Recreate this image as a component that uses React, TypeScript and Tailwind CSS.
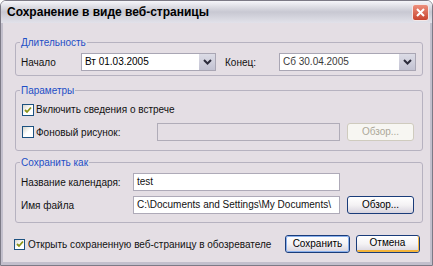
import React from "react";

function Check({ checked, size = "w-[12px] h-[12px]" }: { checked?: boolean; size?: string }) {
  return (
    <span
      className={`${size} shrink-0 border border-[#1c5180] bg-linear-to-br from-[#d8d6cc] via-white to-white flex items-center justify-center`}
    >
      {checked && (
        <svg width="8" height="8" viewBox="0 0 8 8">
          <path d="M1 4 L3 6 L7 1.5" fill="none" stroke="#8c9418" strokeWidth="1.8" />
        </svg>
      )}
    </span>
  );
}

function Select({ value, width, tone = "text-black" }: { value: string; width: string; tone?: string }) {
  return (
    <div className={`${width} h-[18px] flex border border-[#a9a6b4] bg-white`}>
      <span className={`flex-1 pl-[3px] leading-[16px] ${tone}`}>{value}</span>
      <span className="w-[16px] bg-linear-to-b from-[#dcdce6] to-[#c2c2d2] flex items-center justify-center">
        <svg width="9" height="6" viewBox="0 0 9 6">
          <path d="M1 1 L4.5 4.5 L8 1" fill="none" stroke="#2c2c3c" strokeWidth="2" />
        </svg>
      </span>
    </div>
  );
}

function Field({ value, width, disabled }: { value?: string; width: string; disabled?: boolean }) {
  return (
    <div
      className={`${width} h-[18px] pl-[3px] leading-[16px] border ${
        disabled ? "border-[#b0acb8] bg-[#e4dee4]" : "border-[#aeaab8] bg-white"
      } whitespace-nowrap overflow-hidden`}
    >
      {value}
    </div>
  );
}

function Button({ label, width, variant = "normal" }: { label: string; width: string; variant?: "normal" | "disabled" | "focus" | "hover" }) {
  const outer =
    variant === "disabled"
      ? "border-[#cfcbbe] bg-[#f7f6f2] text-[#aca899]"
      : "border-[#1a3c7a] bg-linear-to-b from-white via-[#f4f2f4] to-[#d8d4de] text-black";
  const inner =
    variant === "focus"
      ? "border border-[#8ab0ec]"
      : variant === "hover"
      ? "border-b-2 border-r border-[#f4b43a]"
      : "";
  return (
    <div className={`${width} h-[18px] rounded-[3px] border ${outer} flex`}>
      <div className={`flex-1 rounded-[2px] ${inner} flex items-center justify-center leading-none`}>{label}</div>
    </div>
  );
}

export default function App() {
  return (
    <div className="w-[433px] h-[266px] flex flex-col border border-[#7c7a86] rounded-t-[6px] overflow-hidden font-['Liberation_Sans',Arial,sans-serif] text-[10px] text-[#111]">
      {/* заголовок окна */}
      <div className="h-[22px] shrink-0 flex items-center pl-[6px] pr-[3px] bg-linear-to-b from-[#f6f6fa] via-[#c8c8d2] to-[#e2e2ea]">
        <span className="flex-1 text-[12px] font-bold text-black">Сохранение в виде веб-страницы</span>
        <span className="w-[17px] h-[17px] rounded-[3px] border border-[#f4e8e8] bg-linear-to-b from-[#ec8e7c] to-[#c8432e] flex items-center justify-center">
          <svg width="9" height="9" viewBox="0 0 9 9">
            <path d="M1 1 L8 8 M8 1 L1 8" stroke="white" strokeWidth="2" />
          </svg>
        </span>
      </div>

      <div className="flex-1 flex flex-col border-x-2 border-b-[3px] border-[#c2bfcc] bg-[#e4dee4]">
        {/* Длительность */}
        <fieldset className="mt-[13px] ml-[12px] mr-[7px] h-[40px] border border-[#b6b2c0] rounded-[3px] px-[5px]">
          <legend className="ml-[-1px] px-[1px] leading-[13px] text-[#1e4fc6]">Длительность</legend>
          <div className="mt-[4px] flex items-center">
            <span className="w-[60px]">Начало</span>
            <Select value="Вт 01.03.2005" width="w-[135px]" />
            <span className="ml-[9px] w-[54px]">Конец:</span>
            <Select value="Сб 30.04.2005" width="w-[137px]" tone="text-[#3a3a3a]" />
          </div>
        </fieldset>

        {/* Параметры */}
        <fieldset className="mt-[8px] ml-[12px] mr-[7px] h-[67px] border border-[#b6b2c0] rounded-[3px] px-[5px]">
          <legend className="ml-[-1px] px-[1px] leading-[13px] text-[#1e4fc6]">Параметры</legend>
          <div className="mt-[6px] h-[13px] flex items-center gap-[2px] pl-[1px]">
            <Check checked />
            <span>Включить сведения о встрече</span>
          </div>
          <div className="mt-[7px] flex items-center">
            <div className="w-[136px] flex items-center gap-[2px] pl-[1px]">
              <Check />
              <span>Фоновый рисунок:</span>
            </div>
            <Field width="w-[183px]" disabled />
            <div className="ml-[7px]">
              <Button label="Обзор..." width="w-[67px]" variant="disabled" />
            </div>
          </div>
        </fieldset>

        {/* Сохранить как */}
        <fieldset className="mt-[5px] ml-[12px] mr-[7px] h-[67px] border border-[#b6b2c0] rounded-[3px] px-[5px]">
          <legend className="ml-[-1px] px-[1px] leading-[13px] text-[#1e4fc6]">Сохранить как</legend>
          <div className="mt-[4px] flex items-center">
            <span className="w-[112px]">Название календаря:</span>
            <Field value="test" width="w-[207px]" />
          </div>
          <div className="mt-[5px] flex items-center">
            <span className="w-[112px]">Имя файла</span>
            <Field value="C:\Documents and Settings\My Documents\" width="w-[207px]" />
            <div className="ml-[7px]">
              <Button label="Обзор..." width="w-[67px]" />
            </div>
          </div>
        </fieldset>

        {/* нижняя строка */}
        <div className="mt-[12px] h-[18px] flex items-center pl-[11px] pr-[10px]">
          <Check checked size="w-[11px] h-[11px]" />
          <span className="ml-[3px] flex-1">Открыть сохраненную веб-страницу в обозревателе</span>
          <Button label="Сохранить" width="w-[65px]" variant="focus" />
          <div className="ml-[6px]">
            <Button label="Отмена" width="w-[64px]" variant="hover" />
          </div>
        </div>
      </div>
    </div>
  );
}
